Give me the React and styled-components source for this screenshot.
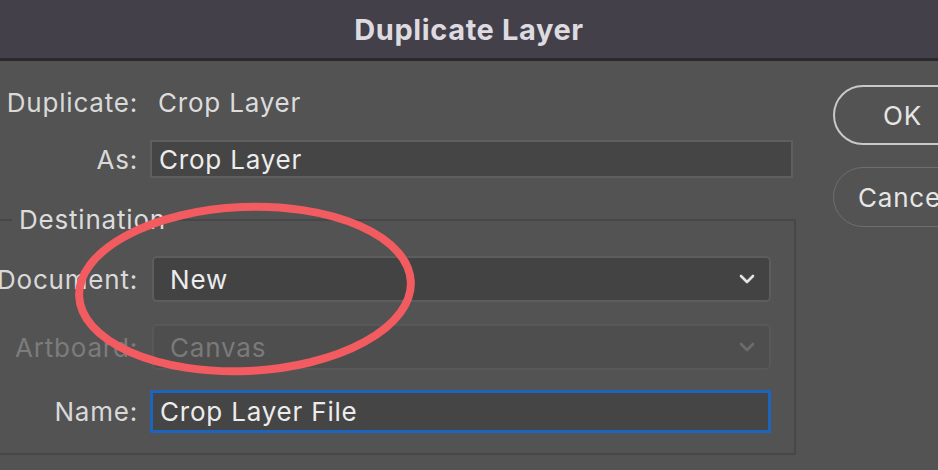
import React from "react";
import styled, { createGlobalStyle } from "styled-components";

const GlobalStyle = createGlobalStyle`
  html, body {
    margin: 0;
    padding: 0;
    background: #535353;
    overflow: hidden;
  }
  body {
    font-family: Inter, "Open Sans", "Liberation Sans", sans-serif;
    letter-spacing: 0.8px;
  }
`;

const Window = styled.div`
  position: relative;
  width: 938px;
  height: 470px;
  overflow: hidden;
  background: #535353;
`;

const TitleBar = styled.header`
  height: 58px;
  background: #434049;
  border-bottom: 3px solid #2a2a2c;
  display: flex;
  align-items: center;
  justify-content: center;
  color: #dddbe0;
  font-size: 29px;
  font-weight: 700;
  letter-spacing: 0.6px;
`;

const Body = styled.div`
  display: flex;
  gap: 37px;
  padding-top: 22px;
`;

const Form = styled.div`
  width: 796px;
  flex-shrink: 0;
  display: flex;
  flex-direction: column;
`;

const Row = styled.div`
  display: flex;
  align-items: center;
  gap: 12px;
  height: ${(p) => p.$h || 38}px;
  margin-top: ${(p) => p.$mt || 0}px;
`;

const Label = styled.div`
  width: ${(p) => p.$w || 138}px;
  flex-shrink: 0;
  display: flex;
  justify-content: flex-end;
  white-space: nowrap;
  font-size: 26px;
  color: ${(p) => (p.$disabled ? "#7c7c7c" : "#d9d9d9")};
`;

const Value = styled.div`
  padding-left: 8px;
  font-size: 26px;
  color: #dcdcdc;
`;

const TextField = styled.div`
  box-sizing: border-box;
  width: ${(p) => p.$w}px;
  height: 100%;
  display: flex;
  align-items: center;
  padding-left: 7px;
  background: #454545;
  border: ${(p) => (p.$focused ? "3px solid #1d64bd" : "2px solid #5f5f5f")};
  font-size: 26px;
  color: #ececec;
`;

const Select = styled.div`
  box-sizing: border-box;
  width: ${(p) => p.$w}px;
  height: 100%;
  margin-left: 2px;
  display: flex;
  align-items: center;
  justify-content: space-between;
  padding: 0 14px 0 16px;
  border-radius: 5px;
  background: ${(p) => (p.$disabled ? "#4e4e4e" : "#434343")};
  border: 2px solid ${(p) => (p.$disabled ? "#585858" : "#5d5d5d")};
  font-size: 26px;
  color: ${(p) => (p.$disabled ? "#7a7a7a" : "#ececec")};
`;

const Group = styled.fieldset`
  margin: 27px 0 0 -20px;
  width: 816px;
  box-sizing: border-box;
  padding: 21px 0 20px 0;
  border: 2px solid #474747;
  display: flex;
  flex-direction: column;
  min-width: 0;
`;

const Legend = styled.legend`
  margin-left: 30px;
  padding: 0 4px 0 7px;
  font-size: 26px;
  line-height: 30px;
  color: #dcdcdc;
`;

const Buttons = styled.div`
  display: flex;
  flex-direction: column;
  gap: 22px;
  padding-top: 2px;
`;

const PillButton = styled.div`
  box-sizing: border-box;
  width: 160px;
  height: 60px;
  border-radius: 30px;
  border: ${(p) => (p.$primary ? "2px solid #c9c9c9" : "1.5px solid #6e6e6e")};
  display: flex;
  align-items: center;
  padding-left: ${(p) => p.$pl}px;
  font-size: 26px;
  color: #e6e6e6;
  white-space: nowrap;
`;

const Mark = styled.svg`
  position: absolute;
  left: 0;
  top: 0;
  pointer-events: none;
`;

const Chevron = ({ dim }) => (
  <svg width="16" height="10" viewBox="0 0 16 10">
    <path
      d="M2 2 L8 8 L14 2"
      fill="none"
      stroke={dim ? "#6c6c6c" : "#e4e4e4"}
      strokeWidth="2.6"
      strokeLinecap="round"
      strokeLinejoin="round"
    />
  </svg>
);

export default function App() {
  return (
    <Window>
      <GlobalStyle />
      <TitleBar>Duplicate Layer</TitleBar>
      <Body>
        <Form>
          <Row>
            <Label>Duplicate:</Label>
            <Value>Crop Layer</Value>
          </Row>
          <Row $mt={19}>
            <Label>As:</Label>
            <TextField $w={643}>Crop Layer</TextField>
          </Row>
          <Group>
            <Legend>Destination</Legend>
            <Row $h={46}>
              <Label $w={156}>Document:</Label>
              <Select $w={619}>
                <span>New</span>
                <Chevron />
              </Select>
            </Row>
            <Row $h={46} $mt={22}>
              <Label $w={156} $disabled>
                Artboard:
              </Label>
              <Select $w={619} $disabled>
                <span>Canvas</span>
                <Chevron dim />
              </Select>
            </Row>
            <Row $h={43} $mt={20}>
              <Label $w={156}>Name:</Label>
              <TextField $w={621} $focused>
                Crop Layer File
              </TextField>
            </Row>
          </Group>
        </Form>
        <Buttons>
          <PillButton $primary $pl={48}>
            OK
          </PillButton>
          <PillButton $pl={24}>Cancel</PillButton>
        </Buttons>
      </Body>
      <Mark width="938" height="470" viewBox="0 0 938 470">
        <ellipse
          cx="245"
          cy="289"
          rx="166"
          ry="82"
          fill="none"
          stroke="#f25b5f"
          strokeWidth="8"
          transform="rotate(-2.5 245 289)"
        />
      </Mark>
    </Window>
  );
}
